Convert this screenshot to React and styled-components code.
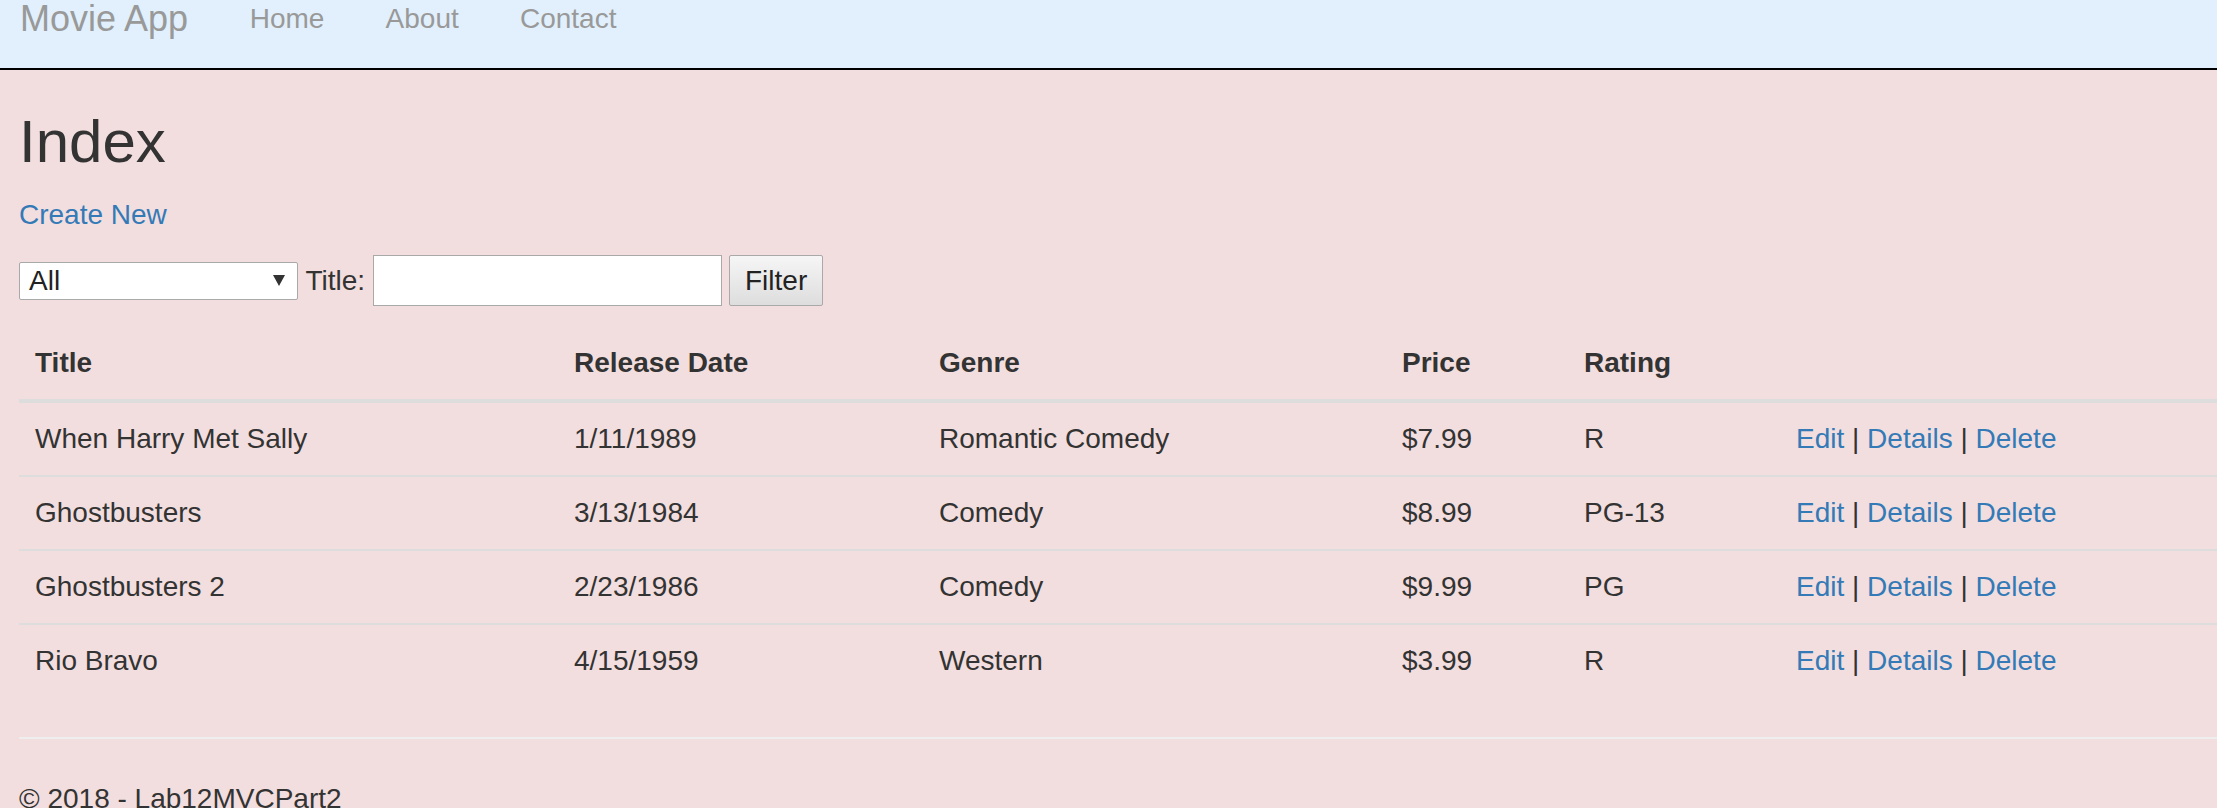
import React from "react";
import styled, { createGlobalStyle } from "styled-components";

const GlobalStyle = createGlobalStyle`
    html, body {
        margin: 0;
        padding: 0;
    }
    body {
        background-color: #f2dede;
        font-family: "Liberation Sans", Arial, sans-serif;
        font-size: 28px;
        line-height: 40px;
        color: #333;
        overflow: hidden;
    }
    * {
        box-sizing: border-box;
    }
`;

const movies = [
    { id: 1, title: "When Harry Met Sally", date: "1/11/1989", genre: "Romantic Comedy", price: "$7.99", rating: "R" },
    { id: 2, title: "Ghostbusters", date: "3/13/1984", genre: "Comedy", price: "$8.99", rating: "PG-13" },
    { id: 3, title: "Ghostbusters 2", date: "2/23/1986", genre: "Comedy", price: "$9.99", rating: "PG" },
    { id: 4, title: "Rio Bravo", date: "4/15/1959", genre: "Western", price: "$3.99", rating: "R" },
];

const columns = [
    { label: "Title", width: 539 },
    { label: "Release Date", width: 365 },
    { label: "Genre", width: 463 },
    { label: "Price", width: 182 },
    { label: "Rating", width: 212 },
    { label: "", width: null },
];

function App() {
    return (
        <Page>
            <GlobalStyle />
            <NavBar>
                <Brand href="#">Movie App</Brand>
                <NavLink href="#">Home</NavLink>
                <NavLink href="#">About</NavLink>
                <NavLink href="#">Contact</NavLink>
            </NavBar>
            <Main>
                <Heading>Index</Heading>
                <Para>
                    <BlueLink href="#">Create New</BlueLink>
                </Para>
                <FilterForm onSubmit={e => e.preventDefault()}>
                    <SelectBox>
                        <span>All</span>
                        <svg width="12" height="11" viewBox="0 0 12 11">
                            <path d="M0 0 H12 L6 11 Z" fill="#333" />
                        </svg>
                    </SelectBox>
                    <Label>Title:</Label>
                    <TextInput type="text" />
                    <FilterButton type="submit">Filter</FilterButton>
                </FilterForm>
                <MovieTable>
                    <colgroup>
                        {columns.map((c, i) => (
                            <col key={i} style={c.width ? { width: c.width } : undefined} />
                        ))}
                    </colgroup>
                    <thead>
                        <tr>
                            {columns.map((c, i) => (
                                <Th key={i}>{c.label}</Th>
                            ))}
                        </tr>
                    </thead>
                    <tbody>
                        {movies.map(m => (
                            <tr key={m.id}>
                                <Td>{m.title}</Td>
                                <Td>{m.date}</Td>
                                <Td>{m.genre}</Td>
                                <Td>{m.price}</Td>
                                <Td>{m.rating}</Td>
                                <Td>
                                    <BlueLink href="#">Edit</BlueLink> |{" "}
                                    <BlueLink href="#">Details</BlueLink> |{" "}
                                    <BlueLink href="#">Delete</BlueLink>
                                </Td>
                            </tr>
                        ))}
                    </tbody>
                </MovieTable>
                <Divider />
                <Footer>© 2018 - Lab12MVCPart2</Footer>
            </Main>
        </Page>
    );
}

export default App;

const Page = styled.div`
    width: 2217px;
    min-height: 808px;
`;

const NavBar = styled.nav`
    display: flex;
    align-items: flex-start;
    height: 70px;
    padding-left: 20px;
    background-color: #e1f0fc;
    border-bottom: 2px solid #000;
`;

const Brand = styled.a`
    font-size: 36px;
    line-height: 36px;
    margin-top: 0.5px;
    padding-right: 31px;
    color: #999;
    text-decoration: none;
`;

const NavLink = styled.a`
    font-size: 28px;
    line-height: 32px;
    margin-top: 2.6px;
    padding: 0 30.6px;
    color: #999;
    text-decoration: none;
`;

const Main = styled.main`
    padding-left: 19px;
`;

const Heading = styled.h2`
    margin: 39px 0 20px;
    font-size: 60px;
    line-height: 66px;
    font-weight: 500;
`;

const Para = styled.p`
    margin: 0 0 20px;
`;

const BlueLink = styled.a`
    color: #337ab7;
    text-decoration: none;
`;

const FilterForm = styled.form`
    display: flex;
    align-items: center;
    gap: 7.5px;
    height: 51px;
    margin: 0 0 21px;
`;

const SelectBox = styled.div`
    display: flex;
    align-items: center;
    justify-content: space-between;
    width: 279px;
    height: 38px;
    padding: 0 12px 0 9px;
    background: #fff;
    border: 1px solid #a9a9a9;
    border-radius: 2px;
    color: #222;
`;

const Label = styled.label`
    color: #333;
`;

const TextInput = styled.input`
    width: 349px;
    height: 51px;
    border: 1px solid #a9a9a9;
    background: #fff;
    font: inherit;
    padding: 0 4px;
    outline: none;
`;

const FilterButton = styled.button`
    width: 94px;
    height: 51px;
    padding: 0;
    border: 1px solid #a9a9a9;
    border-radius: 2px;
    background: linear-gradient(#f6f6f6, #dddddd);
    font: inherit;
    color: #222;
`;

const MovieTable = styled.table`
    width: 100%;
    table-layout: fixed;
    border-collapse: collapse;
    margin-bottom: 40px;
`;

const Th = styled.th`
    padding: 16px;
    text-align: left;
    font-weight: bold;
    vertical-align: bottom;
    border-bottom: 4px solid #ddd;
    white-space: nowrap;
`;

const Td = styled.td`
    padding: 16px;
    vertical-align: top;
    border-top: 2px solid #ddd;
    white-space: nowrap;
`;

const Divider = styled.hr`
    margin: 0 0 40px;
    height: 0;
    border: 0;
    border-top: 2px solid #eee;
`;

const Footer = styled.p`
    margin: 0;
`;
